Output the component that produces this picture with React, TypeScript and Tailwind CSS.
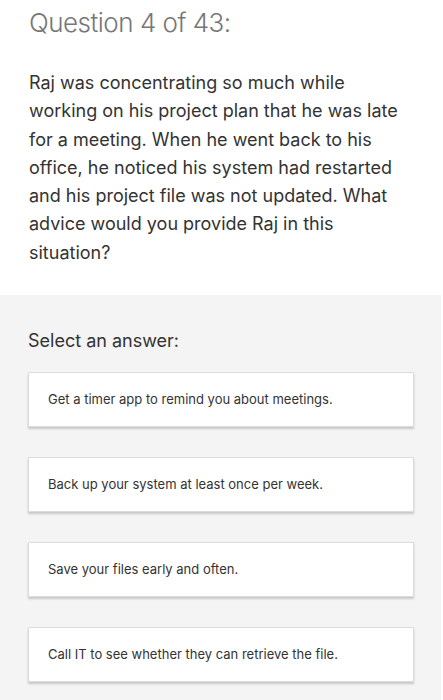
const answers = [
  'Get a timer app to remind you about meetings.',
  'Back up your system at least once per week.',
  'Save your files early and often.',
  'Call IT to see whether they can retrieve the file.',
];

export default function App() {
  return (
    <div className="min-h-[700px] w-[443px] bg-white font-['Inter',sans-serif] text-[#333]">
      <section className="bg-white px-[29px] pt-[5px] pb-[28px]">
        <h1 className="text-[26px] font-light leading-[36px] tracking-[-0.5px] text-[#777]">
          Question 4 of 43:
        </h1>
        <p className="mt-[28px] w-[385px] text-[18px] leading-[28.3px] text-[#333]">
          Raj was concentrating so much while working on his project plan that he was late for a meeting. When he went back to his office, he noticed his system had restarted and his project file was not updated. What advice would you provide Raj in this situation?
        </p>
      </section>
      <section className="mr-[2px] min-h-[405px] bg-[#f4f4f4] px-[28px] pt-[33px] pb-[20px]">
        <h2 className="text-[18px] leading-[26px] text-[#333]">Select an answer:</h2>
        <div className="mt-[18px] flex flex-col gap-[30px]">
          {answers.map((a) => (
            <button
              key={a}
              className="flex h-[55px] w-[386px] items-center border border-[#dcdcdc] bg-white px-[19px] text-left text-[13px] text-[#333] shadow-[0_2px_2px_rgba(0,0,0,0.18)]"
            >
              {a}
            </button>
          ))}
        </div>
      </section>
    </div>
  );
}
